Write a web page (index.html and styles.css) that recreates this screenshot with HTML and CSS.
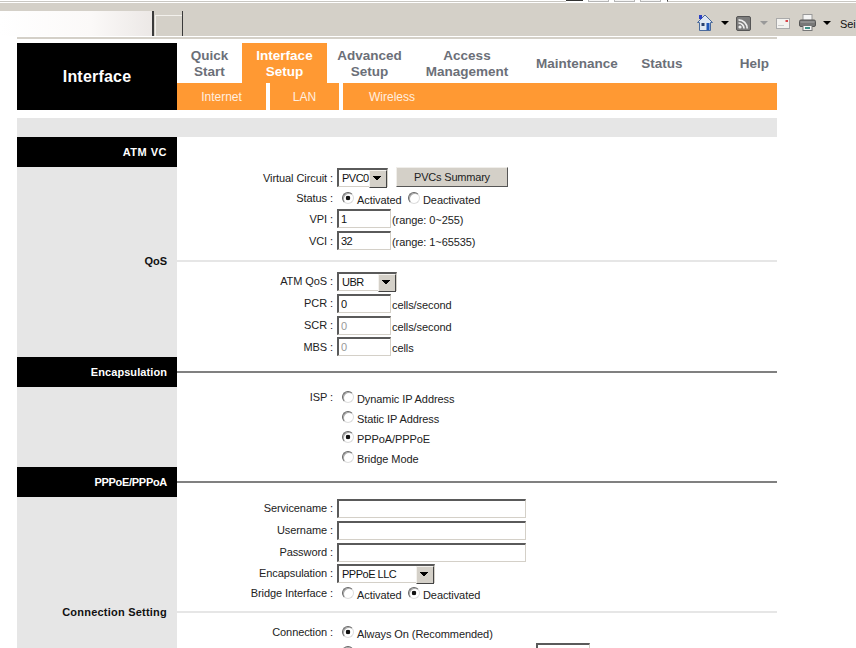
FILE: index.html
```html
<!DOCTYPE html>
<html lang="en">
<head>
<meta charset="utf-8">
<title>Interface Setup</title>
<link rel="stylesheet" href="styles.css">
</head>
<body>
<div class="topstrip">
  <div class="strip-line"></div>
  <div class="strip-dark"></div>
  <div class="strip-tab"></div>
  <div class="strip-tab"></div>
  <div class="strip-tab"></div>
  <div class="strip-end"></div>
</div>
<div class="toolbar">
  <div class="tb-field"></div>
  <div class="tb-box"></div>
  <div class="tb-icons">
    <svg class="ic-home" width="16" height="17" viewBox="0 0 16 17"><path d="M8 1 L0.5 8.5 L2.5 8.5 L2.5 16.5 L13.5 16.5 L13.5 8.5 L15.5 8.5 Z" fill="#dfe7f2" stroke="#4a6a9c"/><rect x="2" y="1" width="3" height="4" fill="#2a3fc4"/><rect x="4.5" y="9" width="3" height="3" fill="#28406e"/><rect x="9.5" y="9" width="3" height="7" fill="#1f56b8"/></svg>
    <span class="tri"></span>
    <svg class="ic-rss" width="15" height="15" viewBox="0 0 15 15"><rect x="0.5" y="0.5" width="14" height="14" rx="1.5" fill="#7c7c7c" stroke="#555"/><circle cx="4" cy="11" r="1.6" fill="#eee"/><path d="M2.5 7 A5.5 5.5 0 0 1 8 12.5 M2.5 3.8 A8.7 8.7 0 0 1 11.2 12.5" fill="none" stroke="#eee" stroke-width="1.7"/></svg>
    <span class="tri tri-off"></span>
    <svg class="ic-mail" width="14" height="11" viewBox="0 0 14 11"><rect x="0.5" y="0.5" width="13" height="10" fill="#f3f2ef" stroke="#aaa"/><rect x="9.5" y="2" width="2.5" height="2" fill="#d8464a"/><path d="M2 7.5 H8" stroke="#ccc"/></svg>
    <svg class="ic-print" width="17" height="17" viewBox="0 0 17 17"><rect x="4" y="0.5" width="9" height="6" fill="#f4f4f4" stroke="#999"/><rect x="0.5" y="6" width="16" height="6.5" rx="1.5" fill="#777" stroke="#555"/><path d="M1.5 8 H15.5" stroke="#a9a9a9"/><rect x="4" y="11.5" width="9" height="5" fill="#f6f6f6" stroke="#777"/><rect x="6" y="13" width="5" height="2" fill="#3f8f86"/></svg>
    <span class="tri tri-last"></span>
    <span class="tb-text">Sei</span>
  </div>
</div>

<div class="page">
  <div class="rule"></div>
  <header class="header">
    <div class="brand">Interface</div>
    <div class="navs">
      <nav class="nav">
        <a class="n-quick">Quick<br>Start</a>
        <a class="n-iface active">Interface<br>Setup</a>
        <a class="n-adv">Advanced<br>Setup</a>
        <a class="n-access">Access<br>Management</a>
        <a class="n-maint">Maintenance</a>
        <a class="n-status">Status</a>
        <a class="n-help">Help</a>
      </nav>
      <div class="subnav">
        <a class="s-internet">Internet</a>
        <a class="s-lan">LAN</a>
        <a class="s-wireless">Wireless</a>
        <span class="s-fill"></span>
      </div>
    </div>
  </header>
  <div class="band"></div>

  <div class="row head"><div class="side ls-atm">ATM VC</div><div class="main"></div></div>
  <div class="row h21"><div class="side"></div><div class="main">
    <label class="lbl">Virtual Circuit :</label>
    <span class="sel w51"><select><option>PVC0</option></select></span>
    <button class="btn" type="button">PVCs Summary</button>
  </div></div>
  <div class="row h20"><div class="side"></div><div class="main">
    <label class="lbl">Status :</label>
    <input class="radio first" type="radio" name="st" checked><span class="opt w51">Activated</span>
    <input class="radio" type="radio" name="st"><span class="opt">Deactivated</span>
  </div></div>
  <div class="row h21"><div class="side"></div><div class="main">
    <label class="lbl">VPI :</label><input class="txt" value="1"><span class="after">(range: 0~255)</span>
  </div></div>
  <div class="row h23"><div class="side"></div><div class="main">
    <label class="lbl">VCI :</label><input class="txt" value="32"><span class="after">(range: 1~65535)</span>
  </div></div>
  <div class="row h18"><div class="side">QoS</div><div class="main"><div class="divider"></div></div></div>
  <div class="row h22"><div class="side"></div><div class="main">
    <label class="lbl">ATM QoS :</label>
    <span class="sel w60"><select><option>UBR</option></select></span>
  </div></div>
  <div class="row h22"><div class="side"></div><div class="main">
    <label class="lbl">PCR :</label><input class="txt" value="0"><span class="after">cells/second</span>
  </div></div>
  <div class="row h22"><div class="side"></div><div class="main">
    <label class="lbl">SCR :</label><input class="txt off" value="0" disabled><span class="after">cells/second</span>
  </div></div>
  <div class="row h21"><div class="side"></div><div class="main">
    <label class="lbl">MBS :</label><input class="txt off" value="0" disabled><span class="after">cells</span>
  </div></div>

  <div class="row head"><div class="side ls-enc">Encapsulation</div><div class="main"><div class="divider dark"></div></div></div>
  <div class="row h20"><div class="side"></div><div class="main">
    <label class="lbl">ISP :</label>
    <input class="radio first" type="radio" name="isp"><span class="opt">Dynamic IP Address</span>
  </div></div>
  <div class="row h20"><div class="side"></div><div class="main">
    <label class="lbl"></label>
    <input class="radio first" type="radio" name="isp"><span class="opt">Static IP Address</span>
  </div></div>
  <div class="row h20"><div class="side"></div><div class="main">
    <label class="lbl"></label>
    <input class="radio first" type="radio" name="isp" checked><span class="opt">PPPoA/PPPoE</span>
  </div></div>
  <div class="row h20"><div class="side"></div><div class="main">
    <label class="lbl"></label>
    <input class="radio first" type="radio" name="isp"><span class="opt">Bridge Mode</span>
  </div></div>

  <div class="row head"><div class="side ls-ppp">PPPoE/PPPoA</div><div class="main"><div class="divider dark"></div></div></div>
  <div class="row h22"><div class="side"></div><div class="main">
    <label class="lbl">Servicename :</label><input class="txt wide">
  </div></div>
  <div class="row h22"><div class="side"></div><div class="main">
    <label class="lbl">Username :</label><input class="txt wide">
  </div></div>
  <div class="row h22"><div class="side"></div><div class="main">
    <label class="lbl">Password :</label><input class="txt wide" type="password">
  </div></div>
  <div class="row h20"><div class="side"></div><div class="main">
    <label class="lbl">Encapsulation :</label>
    <span class="sel w98"><select><option>PPPoE LLC</option></select></span>
  </div></div>
  <div class="row h20"><div class="side"></div><div class="main">
    <label class="lbl">Bridge Interface :</label>
    <input class="radio first" type="radio" name="br"><span class="opt w51">Activated</span>
    <input class="radio" type="radio" name="br" checked><span class="opt">Deactivated</span>
  </div></div>
  <div class="row h18"><div class="side ls-conn">Connection Setting</div><div class="main"><div class="divider"></div></div></div>
  <div class="row h22"><div class="side"></div><div class="main">
    <label class="lbl">Connection :</label>
    <input class="radio first" type="radio" name="cn" checked><span class="opt">Always On (Recommended)</span>
  </div></div>
  <div class="row h22 clipped"><div class="side"></div><div class="main">
    <label class="lbl"></label>
    <input class="radio first" type="radio" name="cn"><span class="opt gap-idle"></span><input class="txt"></div></div>
</div>
</body>
</html>
```

FILE: styles.css
```css
* { box-sizing: border-box; }
html, body { margin: 0; height: 648px; overflow: hidden; background: #fff; }
body { font-family: "Liberation Sans", Arial, sans-serif; font-size: 11px; letter-spacing: -0.08px; color: #222; }

.topstrip { display: flex; height: 3px; background: #fff; }
.strip-line { width: 566px; height: 2px; border-bottom: 1px solid #c9c7c2; }
.strip-dark { width: 17px; height: 1px; margin-right: 5px; background: #333; }
.strip-tab { width: 21px; height: 2px; margin-right: 5px; background: #f4f4f4; border: 1px solid #b5b5b5; border-top: 0; }
.strip-end { flex: 1; height: 2px; margin-left: 1px; border-bottom: 1px solid #c9c7c2; border-left: 1px solid #444; }

.toolbar { display: flex; height: 33px; background: #d4d0c8; }
.tb-field { width: 152px; height: 25px; margin-top: 8px; background: linear-gradient(90deg, #fff 0%, #fbf9f8 60%, #ece8e6 100%); }
.tb-box { width: 31px; height: 25px; margin-top: 8px; border-left: 2px solid #3a3a3a; border-right: 1px solid #3a3a3a; position: relative; }
.tb-box::before { content: ""; position: absolute; left: 1px; right: 0; top: 4px; bottom: 0; border-top: 1px solid #f2f0ec; border-left: 1px solid #f2f0ec; }
.tb-icons { flex: 1; min-width: 0; display: flex; align-items: flex-start; padding-left: 514px; overflow: hidden; white-space: nowrap; font-size: 11px; letter-spacing: -0.1px; }
.tb-icons svg, .tb-icons .tri, .tb-text { flex: none; }
.ic-home { margin-top: 11px; }
.ic-rss { margin-top: 13px; margin-left: 7px; }
.ic-mail { margin-top: 15px; margin-left: 8px; }
.ic-print { margin-top: 11px; margin-left: 9px; }
.tri { width: 0; height: 0; margin: 18px 0 0 8px; border-left: 4px solid transparent; border-right: 4px solid transparent; border-top: 4px solid #000; }
.tri-off { border-top-color: #999; margin-left: 9px; }
.tri-last { margin-left: 7px; }
.tb-text { margin: 15px 0 0 9px; color: #111; }

.page { width: 760px; margin-left: 17px; }
.rule { height: 2px; background: #d4d0c8; margin-top: 1px; }
.header { display: flex; height: 67px; margin-top: 4px; margin-bottom: 8px; }
.brand { width: 160px; display: flex; align-items: center; justify-content: center; background: #000; color: #fff; font-size: 16px; font-weight: bold; letter-spacing: 0.2px; }
.navs { width: 600px; display: flex; flex-direction: column; }
.nav { display: flex; height: 40px; }
.nav a { display: flex; align-items: center; justify-content: center; padding-top: 1px; text-align: center; font-size: 13.5px; line-height: 16px; font-weight: bold; letter-spacing: 0; color: #6b6f78; }
.nav a.active { background: #f93; color: #fff; }
.n-quick { width: 65px; }
.n-iface, .n-adv { width: 85px; }
.n-access, .n-maint { width: 110px; }
.n-status { width: 60px; }
.nav a.n-help { width: 85px; justify-content: flex-end; padding-right: 8px; }
.subnav { display: flex; height: 27px; background: #fff; font-size: 12px; letter-spacing: 0; color: #fff; }
.subnav a { display: flex; align-items: center; justify-content: center; background: #f93; color: #ffefe0; }
.s-internet { width: 89px; }
.s-lan { width: 69px; margin-left: 4px; }
.s-wireless { width: 98px; margin-left: 4px; }
.s-fill { flex: 1; background: #f93; }
.band { height: 19px; background: #e6e6e6; }

.row { display: flex; }
.side { width: 160px; flex: none; background: #e6e6e6; display: flex; align-items: center; justify-content: flex-end; padding-right: 10px; font-weight: bold; letter-spacing: 0; color: #111; white-space: nowrap; }
.head { height: 30px; }
.head .side { background: #000; color: #fff; }
.ls-atm { letter-spacing: 0.5px; }
.ls-enc { letter-spacing: 0.08px; }
.ls-ppp { letter-spacing: -0.3px; }
.ls-conn { letter-spacing: 0.22px; }
.h18 { height: 18px; } .h20 { height: 20px; } .h21 { height: 21px; } .h22 { height: 22px; } .h23 { height: 23px; }
.main { flex: 1; display: flex; align-items: center; min-width: 0; }
.divider { flex: 1; height: 2px; background: #e6e6e6; }
.divider.dark { background: #808080; }
.lbl { width: 156px; flex: none; margin-right: 4px; text-align: right; white-space: nowrap; }

.txt { width: 54px; height: 19px; margin: 0; padding: 0 2px; font: 11px "Liberation Sans", Arial, sans-serif; letter-spacing: -0.5px; color: #111; background: #fff; border: 2px solid; border-color: #5a5a5a #d4d0c8 #d4d0c8 #5a5a5a; border-width: 2px 1px 1px 2px; outline: 0; }
.txt.off { color: #999; }
.txt.wide { width: 189px; }
.after { margin: 3px 0 0 1px; }

.sel { position: relative; display: block; height: 19px; }
.sel select { appearance: none; -webkit-appearance: none; display: block; width: 100%; height: 100%; margin: 0; padding: 0 0 0 3px; font: 11px "Liberation Sans", Arial, sans-serif; letter-spacing: -0.5px; color: #111; background: #fff; border: 2px solid; border-color: #5a5a5a #d4d0c8 #d4d0c8 #5a5a5a; border-width: 2px 1px 1px 2px; border-radius: 0; outline: 0; }
.sel::after { content: ""; position: absolute; right: 1px; top: 2px; width: 16px; height: 16px; background: linear-gradient(#000, #000) 3px 5px / 8px 1px no-repeat, linear-gradient(#000, #000) 4px 6px / 6px 1px no-repeat, linear-gradient(#000, #000) 5px 7px / 4px 1px no-repeat, linear-gradient(#000, #000) 6px 8px / 2px 1px no-repeat, #d4d0c8; border: 1px solid; border-color: #f4f2ee #444 #444 #f4f2ee; }
.w51 { width: 51px; } .w60 { width: 60px; } .w98 { width: 98px; }

.btn { width: 112px; height: 20px; margin: -1px 0 0 8px; padding: 0; font: 11px "Liberation Sans", Arial, sans-serif; letter-spacing: -0.2px; color: #222; background: #d4d0c8; border: 1px solid; border-color: #f0eeea #555 #555 #f0eeea; border-radius: 0; }

.radio { appearance: none; -webkit-appearance: none; width: 12px; height: 12px; flex: none; margin: -1px 3px 0 0; border-radius: 50%; background: #fff; border: 1px solid; border-color: #666 #ddd #ddd #666; box-shadow: inset 1px 1px 0 #aaa; }
.radio.first { margin-left: 5px; }
.radio:checked { background: radial-gradient(circle, #111 0, #111 2px, #fff 2.6px); }
.opt { margin-top: 3px; white-space: nowrap; }
.gap-idle { width: 179px; }
.clipped .main { align-items: flex-start; }
.clipped .radio { margin-top: 3px; }
```
